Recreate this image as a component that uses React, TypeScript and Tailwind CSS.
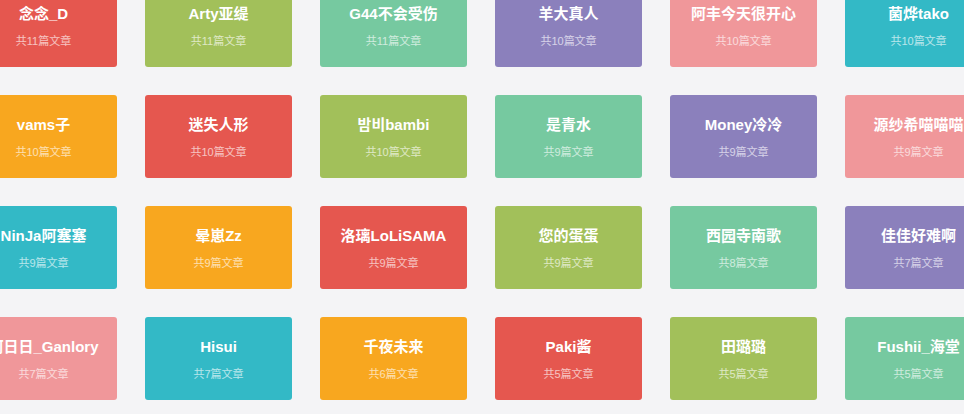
const cards = [
  { name: "念念_D", count: 11, color: "bg-[#e5574f]" },
  { name: "Arty亚缇", count: 11, color: "bg-[#a2c05a]" },
  { name: "G44不会受伤", count: 11, color: "bg-[#76c9a0]" },
  { name: "羊大真人", count: 10, color: "bg-[#8b80bc]" },
  { name: "阿丰今天很开心", count: 10, color: "bg-[#f0979a]" },
  { name: "菌烨tako", count: 10, color: "bg-[#33b9c6]" },
  { name: "vams子", count: 10, color: "bg-[#f8a71f]" },
  { name: "迷失人形", count: 10, color: "bg-[#e5574f]" },
  { name: "밤비bambi", count: 10, color: "bg-[#a2c05a]" },
  { name: "是青水", count: 9, color: "bg-[#76c9a0]" },
  { name: "Money冷冷", count: 9, color: "bg-[#8b80bc]" },
  { name: "源纱希喵喵喵", count: 9, color: "bg-[#f0979a]" },
  { name: "NinJa阿塞塞", count: 9, color: "bg-[#33b9c6]" },
  { name: "晕崽Zz", count: 9, color: "bg-[#f8a71f]" },
  { name: "洛璃LoLiSAMA", count: 9, color: "bg-[#e5574f]" },
  { name: "您的蛋蛋", count: 9, color: "bg-[#a2c05a]" },
  { name: "西园寺南歌", count: 8, color: "bg-[#76c9a0]" },
  { name: "佳佳好难啊", count: 7, color: "bg-[#8b80bc]" },
  { name: "阿日日_Ganlory", count: 7, color: "bg-[#f0979a]" },
  { name: "Hisui", count: 7, color: "bg-[#33b9c6]" },
  { name: "千夜未来", count: 6, color: "bg-[#f8a71f]" },
  { name: "Paki酱", count: 5, color: "bg-[#e5574f]" },
  { name: "田璐璐", count: 5, color: "bg-[#a2c05a]" },
  { name: "Fushii_海堂", count: 5, color: "bg-[#76c9a0]" },
];

// author list wall
export default function App() {
  return (
    <div
      className="w-[964px] h-[414px] overflow-hidden bg-[#f4f4f6]"
      style={{ fontFamily: '"Liberation Sans", "Noto Sans CJK SC", sans-serif' }}
    >
      <div className="-ml-[30px] -mt-[16px] grid grid-cols-[repeat(6,147px)] gap-x-[28px] gap-y-[28px] w-max">
        {cards.map((c) => (
          <div
            key={c.name}
            className={`${c.color} h-[83px] rounded-[3px] flex flex-col items-center text-white whitespace-nowrap`}
          >
            <div className="mt-[19px] text-[15px] font-bold leading-[22px]">{c.name}</div>
            <div className="mt-[8px] text-[11px] leading-[16px] text-white/65">共{c.count}篇文章</div>
          </div>
        ))}
      </div>
    </div>
  );
}
